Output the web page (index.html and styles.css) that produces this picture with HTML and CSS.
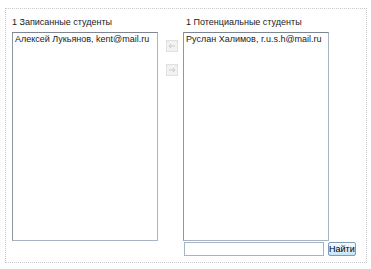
FILE: index.html
```html
<!DOCTYPE html>
<html lang="ru">
<head>
    <meta charset="UTF-8">
    <title>Студенты</title>
    <link rel="stylesheet" href="styles.css">
</head>
<body>
    <div class="panel">
        <div class="column">
            <div class="caption">1 Записанные студенты</div>
            <div class="list">
                <div class="item">Алексей Лукьянов, kent@mail.ru</div>
            </div>
        </div>

        <div class="moves">
            <button class="move" disabled>
                <svg width="8" height="6" viewBox="0 0 8 6"><path d="M1 3h6M1 3l2-2M1 3l2 2" stroke="#c8c8c8" fill="none"/></svg>
            </button>
            <button class="move" disabled>
                <svg width="8" height="6" viewBox="0 0 8 6"><path d="M1 3h6M7 3l-2-2M7 3l-2 2" stroke="#c8c8c8" fill="none"/></svg>
            </button>
        </div>

        <div class="column right">
            <div class="caption">1 Потенциальные студенты</div>
            <div class="list">
                <div class="item">Руслан Халимов, r.u.s.h@mail.ru</div>
            </div>
            <div class="search">
                <input type="text" class="query">
                <button class="find">Найти</button>
            </div>
        </div>
    </div>
</body>
</html>
```

FILE: styles.css
```css
body {
    margin: 0;
    padding: 0;
    background-color: #ffffff;
    font-family: 'Liberation Sans', Arial, sans-serif;
    font-size: 9px;
    color: #1a1a1a;
}

.panel {
    margin: 8px 4px 0 5px;
    height: 255px;
    border: 1px dotted #c8c8c8;
    display: flex;
    box-sizing: border-box;
    padding: 7px 0 0 6px;
}

.column {
    display: flex;
    flex-direction: column;
    width: 146px;
}

.caption {
    height: 16px;
    line-height: 10px;
    padding-top: 1px;
    box-sizing: border-box;
}

.right .caption {
    padding-left: 3px;
}

.list {
    height: 209px;
    border: 1px solid #a8b4c4;
    border-top-color: #7c8590;
    border-left-color: #8e969e;
    background-color: #ffffff;
    padding: 1px 2px;
    box-sizing: border-box;
}

.item {
    line-height: 11px;
}

.moves {
    width: 25px;
    padding: 24px 0 0 8px;
    box-sizing: border-box;
    display: flex;
    flex-direction: column;
    gap: 12px;
}

.move {
    width: 12px;
    height: 12px;
    padding: 0;
    margin: 0;
    border: 1px solid #e0e0e0;
    background-color: #f2f2f2;
    display: flex;
    align-items: center;
    justify-content: center;
}

.search {
    display: flex;
    gap: 4px;
    margin-top: 1px;
    margin-left: 1px;
}

.query {
    width: 140px;
    height: 14px;
    padding: 0;
    margin: 0;
    border: 1px solid #a8b4c4;
    box-sizing: border-box;
}

.find {
    width: 32px;
    height: 14px;
    padding: 0;
    margin: 0;
    border: 1px solid #7f9db9;
    border-radius: 2px;
    background: linear-gradient(to bottom, #f4fbff, #c6e4f6);
    font-family: 'Liberation Sans', Arial, sans-serif;
    font-size: 9px;
    color: #000000;
    line-height: 12px;
}
```
